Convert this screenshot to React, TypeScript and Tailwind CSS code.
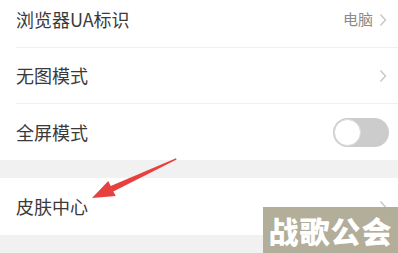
const Chevron = () => (
  <svg width="8" height="14" viewBox="0 0 8 14" fill="none">
    <path d="M1.5 1.5 L6.5 7 L1.5 12.5" stroke="#c4c4c4" strokeWidth="1.3" />
  </svg>
);

export default function App() {
  return (
    <div
      className="relative w-[398px] h-[253px] overflow-hidden bg-white text-[#3a3a3a]"
      style={{ fontFamily: '"Noto Sans CJK SC", "Noto Sans", sans-serif' }}
    >
      <div className="-mt-[8px] flex flex-col">
        <div className="ml-4 h-[56px] flex items-center justify-between border-b border-[#efefef] pr-[11px]">
          <span className="text-[18px]">浏览器UA标识</span>
          <div className="flex items-center gap-[6px]">
            <span className="text-[15px] text-[#8a8a8a]">电脑</span>
            <Chevron />
          </div>
        </div>
        <div className="ml-4 h-[56px] flex items-center justify-between border-b border-[#efefef] pr-[11px]">
          <span className="text-[18px]">无图模式</span>
          <Chevron />
        </div>
        <div className="ml-4 h-[56px] flex items-center justify-between pr-[9px]">
          <span className="text-[18px]">全屏模式</span>
          <div className="w-[56px] h-[29px] rounded-full bg-[#cccccc] p-[1px]">
            <div className="w-[27px] h-[27px] rounded-full bg-white border border-[#dadada]" />
          </div>
        </div>
        <div className="h-[18px] bg-[#f1f1f1]" />
        <div className="pl-4 h-[57px] flex items-center justify-between pr-[11px]">
          <span className="text-[18px]">皮肤中心</span>
          <Chevron />
        </div>
        <div className="h-[30px] bg-[#f1f1f1]" />
      </div>

      <svg className="absolute left-0 top-0" width="398" height="253" viewBox="0 0 398 253">
        <polygon
          points="176,158.3 110.7,186 108.3,181 92,198 115.8,196 113.3,191.4 176.6,159.6"
          fill="#e8403f"
        />
      </svg>

      <div className="absolute left-[263px] top-[207px] w-[135px] h-[46px] bg-[#b2ae99] flex items-center justify-center">
        <span className="text-[30px] font-black text-white tracking-[1px] leading-none">战歌公会</span>
      </div>
    </div>
  );
}
